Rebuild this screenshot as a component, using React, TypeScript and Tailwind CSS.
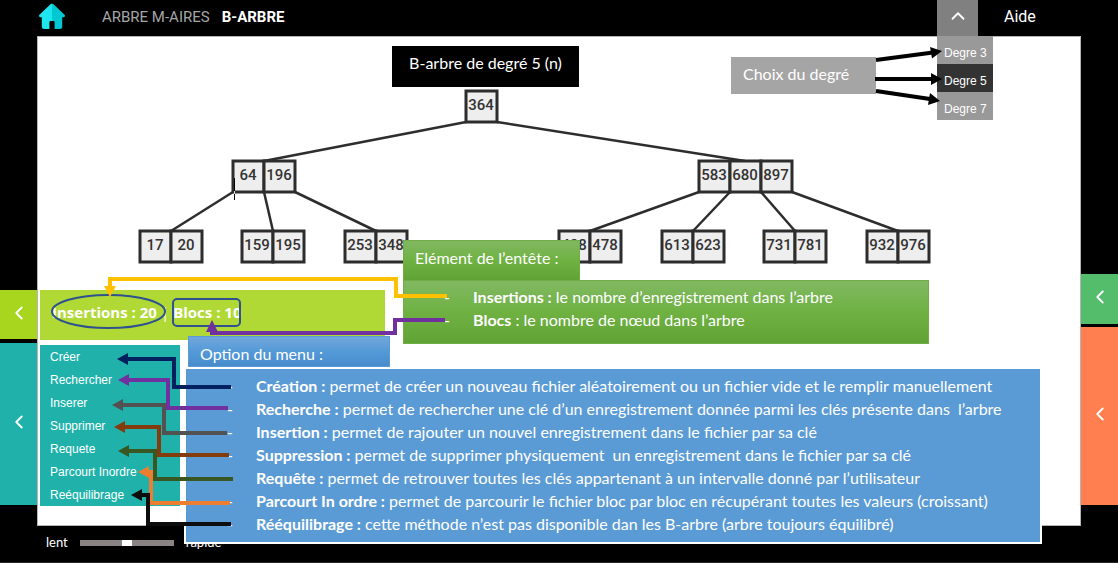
import React, { useState } from "react";
import { ChevronLeft, ChevronUp } from "lucide-react";

type TreeNode = { x: number; y: number; keys: number[] };

const CELL = 31;

const nodes: TreeNode[] = [
  { x: 466, y: 91, keys: [364] },
  { x: 233, y: 161, keys: [64, 196] },
  { x: 699, y: 161, keys: [583, 680, 897] },
  { x: 140, y: 231, keys: [17, 20] },
  { x: 242, y: 231, keys: [159, 195] },
  { x: 345, y: 231, keys: [253, 348] },
  { x: 559, y: 231, keys: [428, 478] },
  { x: 662, y: 231, keys: [613, 623] },
  { x: 764, y: 231, keys: [731, 781] },
  { x: 867, y: 231, keys: [932, 976] },
];

const edges = [
  [466, 122, 264, 161],
  [497, 122, 745, 161],
  [233, 192, 171, 231],
  [264, 192, 273, 231],
  [295, 192, 376, 231],
  [699, 192, 590, 231],
  [730, 192, 693, 231],
  [761, 192, 795, 231],
  [792, 192, 898, 231],
];

const menu = ["Créer", "Rechercher", "Inserer", "Supprimer", "Requete", "Parcourt Inordre", "Reéquilibrage"];

const options = [
  ["Création :", "permet de créer un nouveau fichier aléatoirement ou un fichier vide et le remplir manuellement"],
  ["Recherche :", "permet de rechercher une clé d’un enregistrement donnée parmi les clés présente dans  l’arbre"],
  ["Insertion :", "permet de rajouter un nouvel enregistrement dans le fichier par sa clé"],
  ["Suppression :", "permet de supprimer physiquement  un enregistrement dans le fichier par sa clé"],
  ["Requête :", "permet de retrouver toutes les clés appartenant à un intervalle donné par l’utilisateur"],
  ["Parcourt In ordre :", "permet de parcourir le fichier bloc par bloc en récupérant toutes les valeurs (croissant)"],
  ["Rééquilibrage :", "cette méthode n’est pas disponible dan les B-arbre (arbre toujours équilibré)"],
];

const links = [
  { color: "#002060", tip: 117, y: 359, bend: 174, end: 387, stop: 231 },
  { color: "#7030a0", tip: 118, y: 380, bend: 168, end: 408, stop: 228 },
  { color: "#525252", tip: 112, y: 405, bend: 164, end: 433, stop: 227 },
  { color: "#843c0c", tip: 114, y: 427, bend: 159, end: 455, stop: 229 },
  { color: "#385723", tip: 118, y: 451, bend: 155, end: 479, stop: 233 },
  { color: "#ed7d31", tip: 138, y: 472, bend: 151, end: 503, stop: 230 },
  { color: "#0d0d0d", tip: 131, y: 495, bend: 148, end: 524, stop: 231 },
];

function HomeIcon() {
  return (
    <svg width="28" height="27" viewBox="0 0 28 27" aria-hidden="true">
      <path d="M14 0.500 L12.500 1.300 L1.200 12 Q0.500 13.500 2 14.300 H3.800 V23.500 Q3.800 26 6.300 26 H11.400 V19.200 Q11.400 18 12.600 18 H14 Z" fill="#1fe5ee" />
      <path d="M14 0.500 L15.500 1.300 L26.800 12 Q27.500 13.500 26 14.300 H24.200 V23.500 Q24.200 26 21.700 26 H16.600 V19.200 Q16.600 18 15.400 18 H14 Z" fill="#00c8d2" />
    </svg>
  );
}

function Tree() {
  return (
    <svg className="absolute left-0 top-0" width="1081" height="290" role="img" aria-label="B-arbre">
      {edges.map(([x1, y1, x2, y2]) => (
        <line key={`${x1}-${x2}`} x1={x1} y1={y1} x2={x2} y2={y2} stroke="#2d2d2d" strokeWidth="2.500" />
      ))}
      {nodes.map((n) =>
        n.keys.map((k, i) => (
          <g key={k}>
            <rect x={n.x + i * CELL} y={n.y} width={CELL} height={CELL} fill="#eee" stroke="#2d2d2d" strokeWidth="3" />
            <text x={n.x + i * CELL + 15} y={n.y + 19} textAnchor="middle" fill="#333" className="font-['Roboto',sans-serif] text-[15px] font-medium">
              {k}
            </text>
          </g>
        )),
      )}
      <path d="M234.500 178V191" stroke="#000" />
      <path d="M234.500 191V194" stroke="#ddd" />
      <path d="M234.500 194V200" stroke="#000" />
    </svg>
  );
}

function Connectors() {
  return (
    <svg className="pointer-events-none absolute left-0 top-0 z-20" width="1081" height="544" aria-hidden="true">
      <g fill="none" stroke="#2f528f" strokeWidth="2">
        <ellipse cx="108.500" cy="311.500" rx="56.500" ry="16.500" />
        <rect x="173" y="299" width="67" height="27" rx="4" />
      </g>
      <g fill="none" strokeWidth="4">
        <path d="M447 296H396V279H110V288" stroke="#ffc000" />
        <path d="M445 320H395V333H210" stroke="#7030a0" />
      </g>
      <path d="M104 286H116L110 297Z" fill="#ffc000" />
      <path d="M206 332H218L212 320Z" fill="#7030a0" />
      {links.map((l) => (
        <g key={l.color}>
          <path d={`M${l.tip + 9} ${l.y}H${l.bend}V${l.end}H${l.stop}`} fill="none" stroke={l.color} strokeWidth="4" />
          <path d={`M${l.tip} ${l.y}L${l.tip + 11} ${l.y - 6}V${l.y + 6}Z`} fill={l.color} />
        </g>
      ))}
      <g stroke="#000" strokeWidth="4">
        <path d="M876 60L933 52.500" />
        <path d="M875 79H933" />
        <path d="M876 91L930 99" />
      </g>
      <path d="M942 51L930 47L932 58.500Z" />
      <path d="M942 79L931 73V85Z" />
      <path d="M940 101L930 93L928 105Z" />
    </svg>
  );
}

function Tab({ label, className }: { label: string; className: string }) {
  return (
    <button type="button" aria-label={label} className={`flex w-full items-center justify-center pb-1 text-white ${className}`}>
      <ChevronLeft size={22} strokeWidth={2} />
    </button>
  );
}

export default function App() {
  const [degree, setDegree] = useState(5);

  return (
    <div className="relative flex min-h-screen flex-col overflow-x-hidden bg-black font-['Lato',sans-serif]">
      <header className="flex h-9 items-stretch font-['Roboto',sans-serif] text-[16px] text-white">
        <a href="#accueil" aria-label="Accueil" className="ml-[38px] flex items-center pb-1">
          <HomeIcon />
        </a>
        <nav className="ml-9 flex items-center gap-3 pb-[2px] text-[15px]">
          <a href="#m-aires" className="text-[#a6a6a6]">ARBRE M-AIRES</a>
          <a href="#b-arbre" className="font-bold">B-ARBRE</a>
        </nav>
        <div className="relative z-10 ml-auto flex">
          <button type="button" aria-label="Choix du degré" className="flex w-[41px] items-center justify-center bg-[#808080] pb-1">
            <ChevronUp size={22} strokeWidth={2} />
          </button>
          <div className="absolute left-0 top-full flex w-14 flex-col font-['Liberation_Sans',sans-serif] text-[12px]">
            {[3, 5, 7].map((d) => (
              <button
                key={d}
                type="button"
                onClick={() => setDegree(d)}
                className={`h-7 whitespace-nowrap pl-[7px] pt-[6px] text-left ${d === degree ? "bg-[#333]" : "bg-[#999]"}`}
              >
                Degre {d}
              </button>
            ))}
          </div>
        </div>
        <a href="#aide" className="flex w-[140px] items-center pb-[2px] pl-[26px]">Aide</a>
      </header>

      <main className="grid flex-1 grid-cols-[37px_1fr_37px]">
        <div className="flex flex-col gap-1 pt-[254px]">
          <Tab label="Replier les statistiques" className="h-[49px] bg-[#a8d51e]" />
          <Tab label="Replier le menu" className="h-[162px] bg-[#20b2aa]" />
        </div>

        <div className="border border-[#b5b5b5] bg-white pb-[19px] pl-[2px] pt-[253px]">
          <div className="flex h-[50px] w-[345px] items-center bg-[#b0d936] pb-[6px] pl-3 font-['Open_Sans',sans-serif] text-[15px] font-bold text-white">
            <span>Insertions : 20</span>
            <span className="px-1 font-normal">|</span>
            <span>Blocs : 10</span>
          </div>
          <ul className="mt-[5px] flex w-[140px] flex-col bg-[#20b2aa] font-['Liberation_Sans',sans-serif] text-[12px] leading-[23px] text-white">
            {menu.map((m) => (
              <li key={m} className="h-[23px]">
                <button type="button" className="block w-full whitespace-nowrap pl-[10px] pt-px text-left">{m}</button>
              </li>
            ))}
          </ul>
        </div>

        <div className="flex flex-col gap-[3px] pt-[238px]">
          <Tab label="Ouvrir le panneau vert" className="h-[50px] bg-[#54bd6b]" />
          <Tab label="Ouvrir le panneau orange" className="h-[178px] bg-[#ff7f50]" />
        </div>
      </main>

      <footer className="flex h-[37px] items-center gap-3 border-b border-[#2a2424] pb-[2px] pl-[46px] text-[13px] text-white">
        <label htmlFor="vitesse">lent</label>
        <input
          id="vitesse"
          type="range"
          defaultValue={50}
          className="h-[6px] w-[94px] appearance-none bg-[#8a8383] [&::-webkit-slider-thumb]:h-[6px] [&::-webkit-slider-thumb]:w-[10px] [&::-webkit-slider-thumb]:appearance-none [&::-webkit-slider-thumb]:bg-white"
        />
        <span>rapide</span>
      </footer>

      <Tree />

      <p className="absolute left-[392px] top-[46px] h-[41px] w-[187px] bg-black text-center text-[16px] leading-[34px] text-white">
        B-arbre de degré 5 (n)
      </p>
      <p className="absolute left-[731px] top-[57px] h-[37px] w-[145px] bg-[#a5a5a5] pl-3 text-[16px] leading-[34px] text-white">
        Choix du degré
      </p>

      <section className="absolute left-[403px] top-[240px] w-[526px] text-[16px] text-white">
        <h2 className="h-10 w-[177px] border border-b-0 border-[#70ad47] bg-linear-to-b from-[#81b861] via-[#6fb242] to-[#61a235] pl-[11px] leading-[34px]">
          Elément de l’entête :
        </h2>
        <ul className="h-16 border border-[#70ad47] bg-linear-to-b from-[#81b861] via-[#6fb242] to-[#61a235] pl-10 pt-1 leading-[23px]">
          <li className="flex"><span className="w-[29px]">-</span><span><b>Insertions :</b> le nombre d’enregistrement dans l’arbre</span></li>
          <li className="flex"><span className="w-[29px]">-</span><span><b>Blocs</b> : le nombre de nœud dans l’arbre</span></li>
        </ul>
      </section>

      <section className="absolute left-[184px] top-[336px] w-[858px] text-[16px] text-white">
        <h2 className="ml-1 h-[31px] w-[202px] border border-[#5b9bd5] bg-linear-to-b from-[#71a6db] via-[#549ad8] to-[#478bcb] pl-[11px] leading-[33px]">
          Option du menu :
        </h2>
        <ul className="border-2 border-white bg-[#5b9bd5] pb-[7px] pl-[41px] pt-[5px] leading-[23px]">
          {options.map(([name, text]) => (
            <li key={name} className="flex">
              <span className="w-[29px]">-</span>
              <span className="whitespace-pre"><b>{name}</b> {text}</span>
            </li>
          ))}
        </ul>
      </section>

      <Connectors />
    </div>
  );
}
